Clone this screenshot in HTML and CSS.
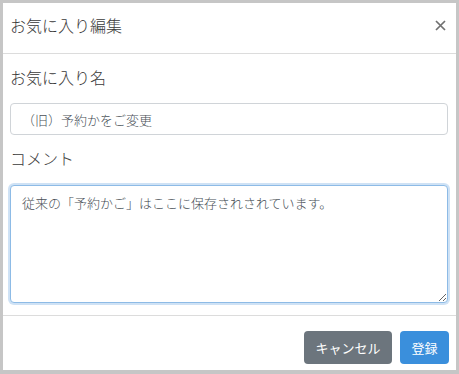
FILE: index.html
```html
<!DOCTYPE html>
<html lang="ja">
<head>
  <meta charset="UTF-8" />
  <meta name="viewport" content="width=device-width, initial-scale=1.0"/>
  <title>お気に入り編集</title>
  <link rel="stylesheet" href="styles.css">
</head>
<body>

  <div class="modal">
    <div class="modal-header">
      <h1>お気に入り編集</h1>
      <button class="close-btn" aria-label="閉じる">
        <svg width="11" height="11" viewBox="0 0 11 11">
          <path d="M1 1 L10 10 M10 1 L1 10" stroke="#707070" stroke-width="1.7" fill="none"/>
        </svg>
      </button>
    </div>

    <div class="modal-body">
      <label class="field-label" for="fav-name">お気に入り名</label>
      <input type="text" id="fav-name" class="form-input" value="（旧）予約かをご変更" />

      <label class="field-label comment-label" for="comment">コメント</label>
      <textarea id="comment" class="form-textarea">従来の「予約かご」はここに保存されされています。</textarea>
    </div>

    <div class="modal-footer">
      <button class="btn btn-cancel">キャンセル</button>
      <button class="btn btn-save">登録</button>
    </div>
  </div>

</body>
</html>
```

FILE: styles.css
```css
* {
  margin: 0;
  padding: 0;
  box-sizing: border-box;
}

body {
  background-color: #c6c6c6;
  font-family: "Noto Sans CJK JP", "Noto Sans", sans-serif;
  padding: 3px 3px 4px 3px;
  color: #3a3a3a;
}

.modal {
  background-color: white;
  height: 367px;
  display: flex;
  flex-direction: column;
}

.modal-header {
  display: flex;
  justify-content: space-between;
  align-items: center;
  padding: 12px 10px 18px 7px;
  border-bottom: 1px solid #dcdcdc;
}

.modal-header h1 {
  font-size: 16px;
  font-weight: 300;
  line-height: 20px;
}

.close-btn {
  background: none;
  border: none;
  width: 11px;
  height: 11px;
  display: flex;
  cursor: pointer;
}

.modal-body {
  display: flex;
  flex-direction: column;
  padding: 11px 8px 12px 7px;
  border-bottom: 1px solid #dcdcdc;
}

.field-label {
  font-size: 16px;
  font-weight: 300;
  line-height: 24px;
  margin-bottom: 14px;
}

.comment-label {
  margin-bottom: 15px;
}

.form-input,
.form-textarea {
  font-family: "Noto Sans CJK JP", "Noto Sans", sans-serif;
  font-size: 13px;
  font-weight: 300;
  color: #495057;
  border: 1px solid #d0d4d8;
  border-radius: 4px;
  padding: 0 11px;
  width: 100%;
}

.form-input {
  height: 32px;
  margin-bottom: 11px;
}

.form-textarea {
  height: 118px;
  padding-top: 8px;
  line-height: 18px;
  border: 1px solid #8dbbe6;
  box-shadow: 0 0 0 2px #cfe2f5;
  outline: none;
  resize: vertical;
}

.modal-footer {
  display: flex;
  justify-content: flex-end;
  gap: 8px;
  padding: 15px 7px 6px 0;
}

.btn {
  height: 33px;
  border: none;
  border-radius: 4px;
  color: white;
  font-family: "Noto Sans CJK JP", "Noto Sans", sans-serif;
  font-size: 13px;
  cursor: pointer;
}

.btn-cancel {
  width: 88px;
  background-color: #6c757d;
}

.btn-save {
  width: 49px;
  background-color: #3a8fdc;
}
```
